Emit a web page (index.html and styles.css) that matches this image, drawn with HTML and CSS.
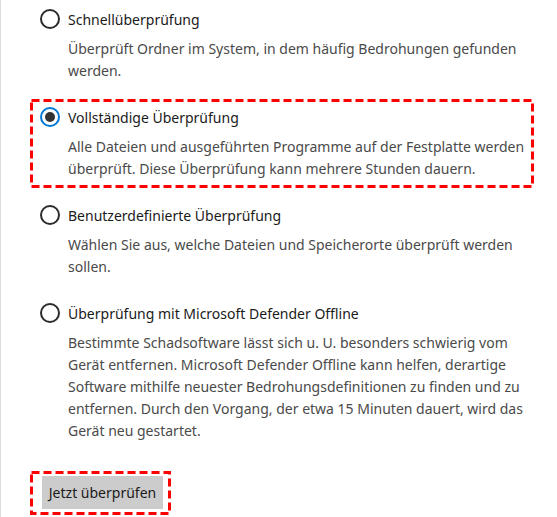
FILE: index.html
```html
<!DOCTYPE html>
<html lang="de">
  <head>
    <meta charset="UTF-8" />
    <meta name="viewport" content="width=device-width, initial-scale=1.0" />
    <title>Überprüfungsoptionen</title>
    <link rel="stylesheet" href="styles.css">
  </head>
  <body>
    <main class="panel">
      <!-- Scan options -->
      <section class="options">
        <label class="option">
          <span class="row">
            <span class="radio"></span>
            <span class="label">Schnellüberprüfung</span>
          </span>
          <p class="desc">Überprüft Ordner im System, in dem häufig Bedrohungen gefunden werden.</p>
        </label>

        <label class="option">
          <span class="row">
            <span class="radio checked"></span>
            <span class="label">Vollständige Überprüfung</span>
          </span>
          <p class="desc">Alle Dateien und ausgeführten Programme auf der Festplatte werden überprüft. Diese Überprüfung kann mehrere Stunden dauern.</p>
          <svg class="dash" width="100%" height="100%"><rect x="1.5" y="1.5" width="calc(100% - 3px)" height="calc(100% - 3px)" /></svg>
        </label>

        <label class="option">
          <span class="row">
            <span class="radio"></span>
            <span class="label">Benutzerdefinierte Überprüfung</span>
          </span>
          <p class="desc">Wählen Sie aus, welche Dateien und Speicherorte überprüft werden sollen.</p>
        </label>

        <label class="option">
          <span class="row">
            <span class="radio"></span>
            <span class="label">Überprüfung mit Microsoft Defender Offline</span>
          </span>
          <p class="desc">Bestimmte Schadsoftware lässt sich u. U. besonders schwierig vom Gerät entfernen. Microsoft Defender Offline kann helfen, derartige Software mithilfe neuester Bedrohungsdefinitionen zu finden und zu entfernen. Durch den Vorgang, der etwa 15 Minuten dauert, wird das Gerät neu gestartet.</p>
        </label>
      </section>

      <!-- Scan button -->
      <div class="action">
        <button class="scan">Jetzt überprüfen</button>
        <svg class="dash" width="100%" height="100%"><rect x="1.5" y="1.5" width="calc(100% - 3px)" height="calc(100% - 3px)" /></svg>
      </div>
    </main>
  </body>
</html>
```

FILE: styles.css
```css
* {
  box-sizing: border-box;
}

body {
  margin: 0;
  background: #fff;
  font-family: "Noto Sans", "Open Sans", sans-serif;
  font-size: 14px;
}

.panel {
  height: 517px;
  overflow: hidden;
  border-left: 1px solid #dcdcdc;
  padding-left: 29px;
}

/* Options */
.options {
  display: flex;
  flex-direction: column;
  gap: 9px;
  width: 504px;
}

.option {
  position: relative;
  display: block;
  padding: 8px 1px 8px 10px;
}

.option:first-child {
  padding-top: 9px;
}

.row {
  display: flex;
  align-items: center;
  gap: 8px;
  height: 20px;
}

.radio {
  flex: none;
  width: 20px;
  height: 20px;
  border-radius: 50%;
  border: 2px solid #2b2b2b;
}

.radio.checked {
  border-color: #0078d4;
  display: flex;
  justify-content: center;
  align-items: center;
}

.radio.checked::after {
  content: "";
  width: 10px;
  height: 10px;
  border-radius: 50%;
  background: #333;
}

.label {
  color: #1a1a1a;
  white-space: nowrap;
}

.desc {
  margin: 9px 0 0 28px;
  line-height: 22px;
  color: #4a4a4a;
}

/* Red dashed marker */
.dash {
  position: absolute;
  inset: 0;
  pointer-events: none;
}

.dash rect {
  fill: none;
  stroke: #ff0000;
  stroke-width: 3;
  stroke-dasharray: 8 4;
}

/* Button */
.action {
  position: relative;
  display: inline-block;
  margin-top: 21px;
  padding: 5px 8px 6px 12px;
}

.scan {
  display: block;
  width: 121px;
  height: 33px;
  padding: 0;
  border: 0;
  background: #cccccc;
  color: #1a1a1a;
  font-family: inherit;
  font-size: 14px;
  white-space: nowrap;
}
```
